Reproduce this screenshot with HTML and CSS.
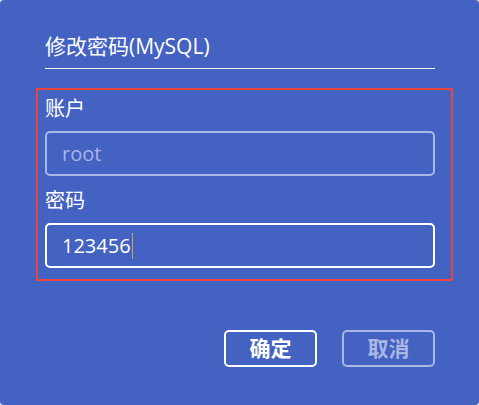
FILE: index.html
```html
<!DOCTYPE html>
<html lang="zh">
<head>
    <meta charset="UTF-8">
    <meta name="viewport" content="width=device-width, initial-scale=1.0">
    <title>修改密码(MySQL)</title>
    <link rel="stylesheet" href="styles.css">
</head>
<body>
    <div class="dialog">
        <h1 class="title">修改密码(MySQL)</h1>
        <div class="form-box">
            <label class="label" for="user">账户</label>
            <div class="field disabled" id="user">root</div>
            <label class="label second" for="pass">密码</label>
            <div class="field active" id="pass">123456<span class="caret"></span></div>
        </div>
        <div class="actions">
            <button class="btn">确定</button>
            <button class="btn muted">取消</button>
        </div>
    </div>
</body>
</html>
```

FILE: styles.css
```css
html {
    background: #dfe4f5;
}

body {
    margin: 0;
    font-family: "Open Sans", "Noto Sans CJK SC", sans-serif;
    color: #fff;
}

.dialog {
    width: 479px;
    height: 405px;
    box-sizing: border-box;
    background-color: #4462c2;
    border-radius: 4px;
    padding: 32px 44px 0 45px;
}

.title {
    margin: 0;
    font-size: 21px;
    font-weight: normal;
    line-height: 28px;
    padding-bottom: 8px;
    border-bottom: 1px solid #fff;
    width: 390px;
}

.form-box {
    margin: 19px 0 0 -9px;
    width: 417px;
    box-sizing: border-box;
    border: 2px solid #e8453c;
    padding: 7px 16px 11px 7px;
}

.label {
    display: block;
    font-size: 20px;
    line-height: 24px;
    margin-bottom: 10px;
}

.label.second {
    margin-top: 13px;
}

.field {
    height: 45px;
    box-sizing: border-box;
    border: 2px solid #fff;
    border-radius: 5px;
    padding: 0 15px;
    font-size: 20px;
    line-height: 41px;
    display: flex;
    align-items: center;
}

.field.disabled {
    border-color: #aab6e4;
    color: #a8b5e6;
}

.caret {
    display: inline-block;
    width: 1px;
    height: 26px;
    margin-left: 1px;
    background: #c9a54a;
}

.actions {
    display: flex;
    justify-content: flex-end;
    gap: 25px;
    margin-top: 49px;
    width: 390px;
}

.btn {
    width: 93px;
    height: 37px;
    border: 2px solid #fff;
    border-radius: 5px;
    background: transparent;
    color: #fff;
    font-family: inherit;
    font-size: 21px;
    font-weight: bold;
    line-height: 31px;
    padding: 0;
    cursor: pointer;
}

.btn.muted {
    border-color: #aab6e4;
    color: #aab6e4;
}
```
